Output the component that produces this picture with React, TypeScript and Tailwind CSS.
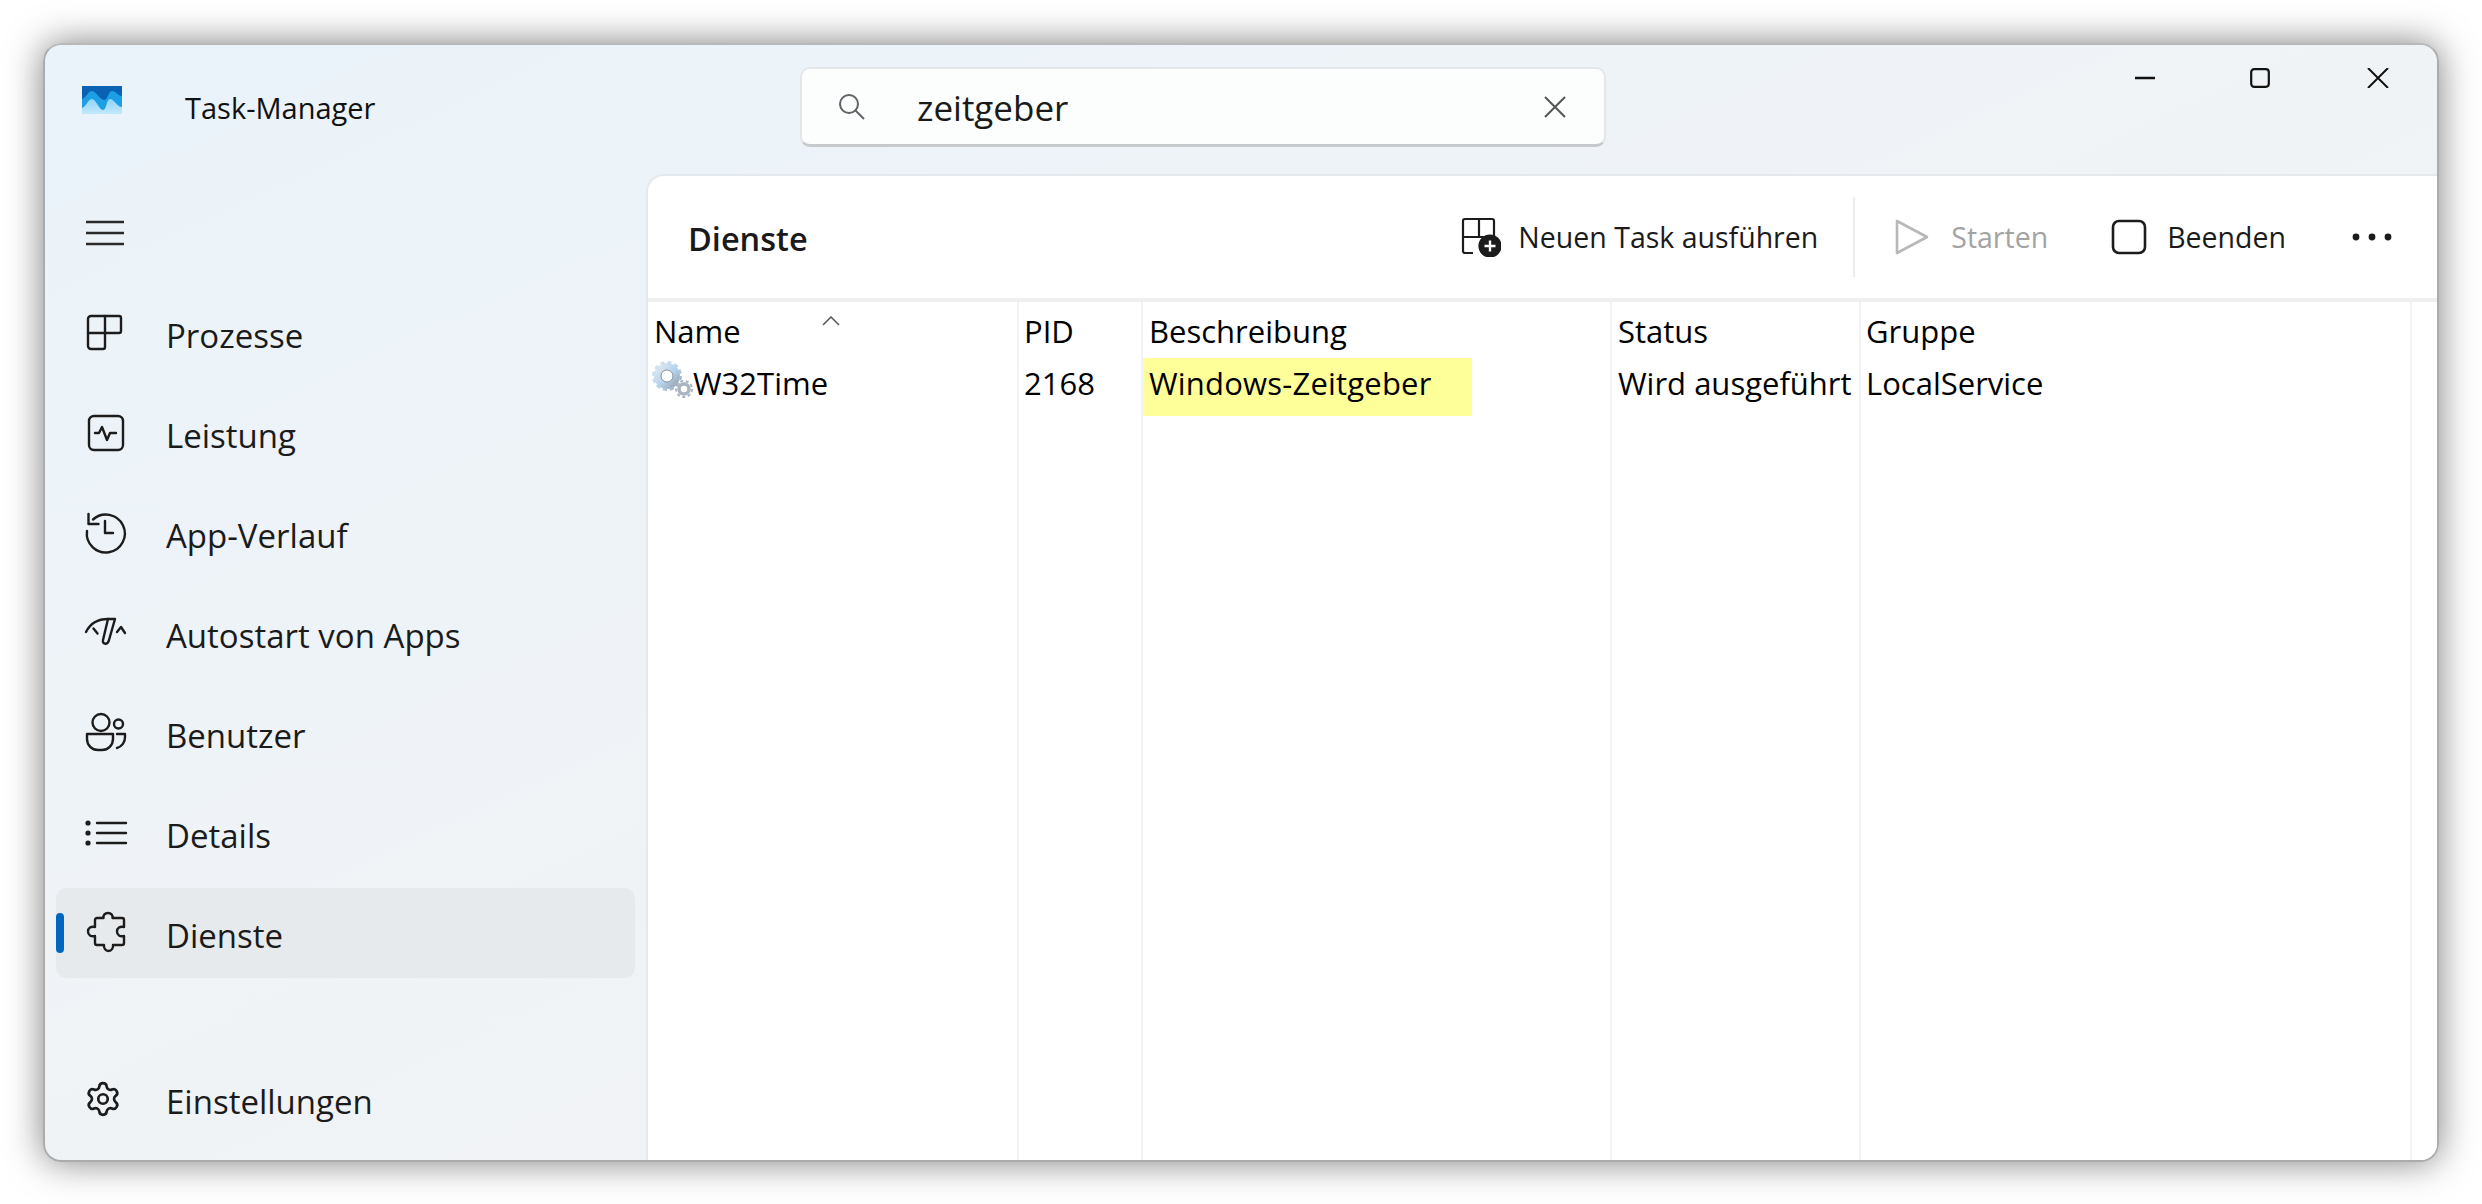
import { Settings } from 'lucide-react';
import type { ReactNode } from 'react';

const FONT = "font-['Open_Sans','Noto_Sans',sans-serif]";

// sidebar icons are all drawn in a 40x40 box
const Icon = ({ children }: { children: ReactNode }) => (
  <svg width="40" height="40" viewBox="0 0 40 40" fill="none" stroke="#1c1c1c" strokeWidth="2.4" strokeLinecap="round" strokeLinejoin="round" className="overflow-visible">
    {children}
  </svg>
);

const navItems: { label: string; icon: ReactNode; active?: boolean }[] = [
  {
    label: 'Prozesse',
    icon: (
      <Icon>
        <path d="M7 3h28a2 2 0 0 1 2 2v13a2 2 0 0 1-2 2H21v14a2 2 0 0 1-2 2H7a3 3 0 0 1-3-3V6a3 3 0 0 1 3-3z" />
        <path d="M21 3v17M4 20h17" />
      </Icon>
    ),
  },
  {
    label: 'Leistung',
    icon: (
      <Icon>
        <rect x="5" y="3" width="34" height="34" rx="5" />
        <path d="M11 20h4l3-6 5 13 3-7h6" />
      </Icon>
    ),
  },
  {
    label: 'App-Verlauf',
    icon: (
      <Icon>
        <path d="M9 6.500A19 19 0 1 1 3 18" />
        <path d="M4.500 1v10h10" />
        <path d="M21 8v12h8" />
      </Icon>
    ),
  },
  {
    label: 'Autostart von Apps',
    icon: (
      <Icon>
        <path d="M2 19C6 11 13 6 24 6" />
        <path d="M9.500 15.500l4 5" />
        <path d="M31 6L25 27c-1 5-7 5-6 0L24 6z" />
        <path d="M33 19l4-5 4 6" />
      </Icon>
    ),
  },
  {
    label: 'Benutzer',
    icon: (
      <Icon>
        <circle cx="17" cy="9.500" r="8.500" />
        <circle cx="34.500" cy="11" r="4.500" />
        <path d="M3 21h26v5a11 11 0 0 1-11 11h-4A11 11 0 0 1 3 26z" />
        <path d="M33 21h8v3a11 11 0 0 1-8 11" />
      </Icon>
    ),
  },
  {
    label: 'Details',
    icon: (
      <Icon>
        <path d="M13 10h29M13 20h29M13 30h29" />
        <circle cx="4" cy="10" r="1.400" fill="#1c1c1c" />
        <circle cx="4" cy="20" r="1.400" fill="#1c1c1c" />
        <circle cx="4" cy="30" r="1.400" fill="#1c1c1c" />
      </Icon>
    ),
  },
  {
    label: 'Dienste',
    active: true,
    icon: (
      <Icon>
        <path d="M13 5h6.500c-.5-3 1.500-5 4.500-5s5 2 4.500 5H38a2 2 0 0 1 2 2v7c-4-1-7 1-7 4.500s3 5.500 7 4.500v7a2 2 0 0 1-2 2h-9c.5 3-1.500 6-4.500 6s-5-3-4.500-6H13a2 2 0 0 1-2-2v-7c-4 1-7-1-7-4.500s3-5.500 7-4.500V7a2 2 0 0 1 2-2z" />
      </Icon>
    ),
  },
];

const columns = [
  { width: 'w-[371px]', title: 'Name', pad: 'pl-[6px]' },
  { width: 'w-[124px]', title: 'PID', pad: 'pl-[5px]' },
  { width: 'w-[469px]', title: 'Beschreibung', pad: 'pl-[6px]' },
  { width: 'w-[249px]', title: 'Status', pad: 'pl-[6px]' },
  { width: 'w-[551px]', title: 'Gruppe', pad: 'pl-[5px]' },
];

function NavRow({ label, icon, active }: { label: string; icon: ReactNode; active?: boolean }) {
  return (
    <div className={`mx-[11px] my-[5px] flex h-[90px] w-[579px] items-center rounded-[10px] ${active ? 'bg-[#e7eaed]' : ''}`}>
      <div className={`h-[40px] w-[8px] rounded-full ${active ? 'bg-[#0067c0]' : ''}`} />
      <div className="ml-[20px] w-[40px]">{icon}</div>
      <span className="ml-[42px] pt-[5px] text-[33px] leading-[44px] text-[#1b1b1b]">{label}</span>
    </div>
  );
}

function TableCell({ col }: { col: number }) {
  if (col === 0)
    return (
      <div className="flex h-[58px] items-center pl-[4px]">
        <svg width="42" height="38" viewBox="0 0 42 38" className="-mt-[14px] shrink-0">
          <defs>
            <linearGradient id="gearFill" x1="0" y1="0" x2="1" y2="1">
              <stop offset="0" stopColor="#dfe6ec" />
              <stop offset="0.55" stopColor="#b5d3ee" />
              <stop offset="1" stopColor="#9aa7b3" />
            </linearGradient>
          </defs>
          <circle cx="15" cy="15" r="9.500" fill="#fff" stroke="url(#gearFill)" strokeWidth="7" />
          <circle cx="15" cy="15" r="13.500" fill="none" stroke="url(#gearFill)" strokeWidth="3" strokeDasharray="4 3.070" />
          <circle cx="15" cy="15" r="6" fill="none" stroke="#8793a0" strokeWidth="1" />
          <circle cx="32" cy="28" r="5" fill="#fff" stroke="#aab4be" strokeWidth="3.500" />
          <circle cx="32" cy="28" r="8" fill="none" stroke="#aab4be" strokeWidth="2" strokeDasharray="3 2.600" />
        </svg>
        <span className="-mt-[8px] -ml-px text-[31px] leading-[44px] text-black">W32Time</span>
      </div>
    );
  const text = ['', '2168', 'Windows-Zeitgeber', 'Wird ausgeführt', 'LocalService'][col];
  const pad = columns[col].pad;
  if (col === 2)
    return (
      <div className={`flex h-[58px] w-[329px] items-center bg-[#ffff99] ${pad}`}>
        <span className="-mt-[8px] whitespace-nowrap text-[31px] leading-[44px] tracking-[0.2px] text-black">{text}</span>
      </div>
    );
  return (
    <div className={`flex h-[58px] items-center ${pad}`}>
      <span className="-mt-[8px] whitespace-nowrap text-[31px] leading-[44px] text-black">{text}</span>
    </div>
  );
}

export default function App() {
  return (
    <div className={`h-[1204px] w-[2482px] overflow-hidden bg-white pb-[42px] pl-[43px] pr-[43px] pt-[43px] ${FONT}`}>
      <div className="flex h-full w-full flex-col overflow-hidden rounded-[18px] border-2 border-[#ababab] border-t-[#b9b9b9] bg-linear-to-br from-[#eaf3fa] via-[#f0f3f6] via-50% to-[#f3f3f3] shadow-[0_0_36px_rgba(0,0,0,0.5)]">
        {/* Title bar */}
        <div className="flex h-[129px] shrink-0">
          <div className="flex h-[129px] w-[755px] shrink-0">
            <svg width="40" height="28" viewBox="0 0 40 28" className="ml-[37px] mt-[41px] shrink-0">
              <defs>
                <linearGradient id="logoLight" x1="0" y1="0" x2="0" y2="1">
                  <stop offset="0" stopColor="#8fd3f8" />
                  <stop offset="1" stopColor="#c3e9fd" />
                </linearGradient>
              </defs>
              <rect width="40" height="28" fill="#0b62b5" />
              <path d="M0 13C4 12 6 5 10 5s8 9 12 9 4-9 8-9 6 5 10 5v18H0z" fill="#1c9fe4" />
              <path d="M0 22c4-1 6-9 10-9s7 11 11 11 3-11 7-11 7 8 12 8v7H0z" fill="url(#logoLight)" />
            </svg>
            <span className="ml-[63px] mt-[43px] whitespace-nowrap text-[29px] leading-[40px] text-[#111]">Task-Manager</span>
          </div>
          <div className="mt-[22px] flex h-[80px] w-[806px] shrink-0 items-center rounded-[10px] border-2 border-b-[3px] border-[#e3e7ea] border-b-[#c6cacd] bg-[#fcfdfd] pl-[36px]">
            <svg width="28" height="28" viewBox="0 0 28 28" fill="none" stroke="#5f6367" strokeWidth="2">
              <circle cx="11" cy="11" r="9" />
              <path d="M17.500 17.500L26 26" />
            </svg>
            <span className="ml-[51px] pt-[2px] text-[35px] leading-[44px] text-[#1a1a1a]">zeitgeber</span>
            <svg width="22" height="22" viewBox="0 0 22 22" fill="none" stroke="#555" strokeWidth="2" className="ml-auto mr-[38px]">
              <path d="M1 1l20 20M21 1L1 21" />
            </svg>
          </div>
          {/* Window controls */}
          <div className="flex flex-1 items-start justify-end pr-[48px] pt-[23px] text-[#111]">
            <svg width="20" height="20" viewBox="0 0 20 20" fill="none" stroke="#111" strokeWidth="2.500">
              <path d="M0 10h20" />
            </svg>
            <svg width="20" height="20" viewBox="0 0 20 20" fill="none" stroke="#111" strokeWidth="2.200" className="ml-[95px]">
              <rect x="1.200" y="1.200" width="17.600" height="17.600" rx="3" />
            </svg>
            <svg width="22" height="20" viewBox="0 0 22 20" fill="none" stroke="#111" strokeWidth="2" className="ml-[97px]">
              <path d="M1 0l20 20M21 0L1 20" />
            </svg>
          </div>
        </div>

        <div className="flex min-h-0 flex-1">
          {/* Sidebar */}
          <aside className="flex w-[601px] shrink-0 flex-col">
            <div className="h-[109px] shrink-0 pl-[41px] pt-[46px]">
              <svg width="38" height="26" viewBox="0 0 38 26" fill="none" stroke="#2a2a2a" strokeWidth="2.500">
                <path d="M0 2h38M0 13h38M0 24h38" />
              </svg>
            </div>
            {navItems.map((item) => (
              <NavRow key={item.label} {...item} />
            ))}
            <div className="mb-[11px] mt-auto">
              <NavRow
                label="Einstellungen"
                icon={<Settings size={38} strokeWidth={1.700} color="#1c1c1c" />}
              />
            </div>
          </aside>

          {/* Main panel */}
          <main className="flex min-w-0 flex-1 flex-col rounded-tl-[18px] border-l-2 border-t-2 border-[#e4e9ed] bg-white">
            <div className="flex h-[126px] shrink-0 items-center border-b-[4px] border-[#efefef]">
              <h1 className="ml-[40px] pt-[4px] text-[32.500px] font-semibold text-[#1a1a1a]">Dienste</h1>
              <div className="ml-auto flex items-center">
                <svg width="40" height="40" viewBox="0 0 40 40" fill="none" stroke="#1c1c1c" strokeWidth="2.200">
                  <path d="M12 36H4a2 2 0 0 1-2-2V4a2 2 0 0 1 2-2h27a2 2 0 0 1 2 2v15M18 2v18H2M18 20h15" />
                  <circle cx="29" cy="29" r="10.500" fill="#1c1c1c" />
                  <path d="M29 23.500v11M23.500 29h11" stroke="#fff" strokeWidth="2.400" />
                </svg>
                <span className="ml-[17px] text-[28.500px] leading-[44px] text-[#1b1b1b]">Neuen Task ausführen</span>
                <div className="ml-[35px] h-[80px] w-[2px] bg-[#ececec]" />
                <svg width="34" height="36" viewBox="0 0 34 36" fill="none" stroke="#b8b8b8" strokeWidth="2.600" strokeLinejoin="round" className="ml-[40px]">
                  <path d="M2 2l30 16L2 34z" />
                </svg>
                <span className="ml-[22px] text-[28.500px] leading-[44px] text-[#a3a3a3]">Starten</span>
                <svg width="36" height="36" viewBox="0 0 36 36" fill="none" stroke="#1c1c1c" strokeWidth="2.600" className="ml-[63px]">
                  <rect x="2" y="2" width="32" height="32" rx="6" />
                </svg>
                <span className="ml-[20px] text-[28.500px] leading-[44px] text-[#1b1b1b]">Beenden</span>
                <svg width="40" height="10" viewBox="0 0 40 10" fill="#1c1c1c" className="ml-[66px] mr-[45px]">
                  <circle cx="4" cy="5" r="3.400" />
                  <circle cx="20" cy="5" r="3.400" />
                  <circle cx="36" cy="5" r="3.400" />
                </svg>
              </div>
            </div>

            <div className="flex min-h-0 flex-1">
              {columns.map((c, i) => (
                <div key={c.title} className={`${c.width} shrink-0 border-r-2 border-[#f0f3f8]`}>
                  <div className={`flex h-[56px] items-center justify-between pt-[1px] ${c.pad}`}>
                    <span className="whitespace-nowrap text-[31px] leading-[44px] text-black">{c.title}</span>
                    {i === 0 && (
                      <svg width="18" height="10" viewBox="0 0 18 10" fill="none" stroke="#555" strokeWidth="1.500" className="mb-[20px] mr-[177px]">
                        <path d="M1 9l8-8 8 8" />
                      </svg>
                    )}
                  </div>
                  <TableCell col={i} />
                </div>
              ))}
            </div>
          </main>
        </div>
      </div>
    </div>
  );
}
